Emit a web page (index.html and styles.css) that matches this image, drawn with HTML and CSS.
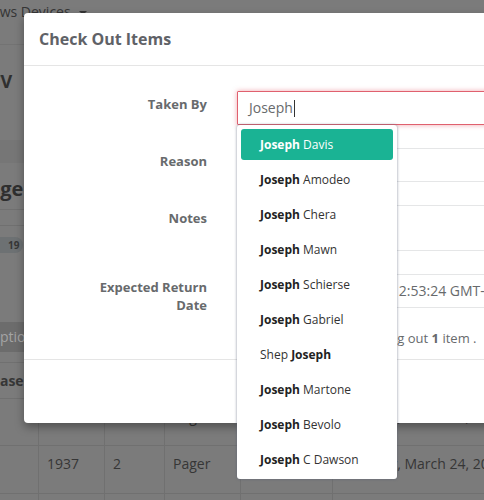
FILE: index.html
```html
<!DOCTYPE html>
<html>
<head>
<meta charset="utf-8">
<link rel="stylesheet" href="styles.css">
</head>
<body>
<div class="page">
  <div class="topbar"><span class="nav-link">Shows Devices</span><span class="nav-caret"></span></div>
  <div class="section-head"><h2 class="h-view">TV</h2></div>
  <div class="band"></div>
  <div class="section-title"><h2 class="h-manage">Manage Devices</h2></div>
  <div class="thin-row"></div>
  <div class="badge-row"><span class="badge">19</span></div>
  <div class="options-bar"><span class="options-text">Options</span></div>
  <div class="grid">
    <div class="cell head"><span class="cut">Case #</span></div>
    <div class="cell head">Item #</div>
    <div class="cell head">Qty</div>
    <div class="cell head">Type</div>
    <div class="cell head">Model</div>
    <div class="cell head">Date</div>

    <div class="cell r2"></div>
    <div class="cell r2">1936</div>
    <div class="cell r2">1</div>
    <div class="cell r2">Pager</div>
    <div class="cell r2"></div>
    <div class="cell r2 date-cell">Tuesday, March 24, 2015</div>

    <div class="cell r3"></div>
    <div class="cell r3">1937</div>
    <div class="cell r3">2</div>
    <div class="cell r3">Pager</div>
    <div class="cell r3"></div>
    <div class="cell r3 date-cell">Tuesday, March 24, 2015</div>

    <div class="cell r4"></div>
    <div class="cell r4"></div>
    <div class="cell r4"></div>
    <div class="cell r4"></div>
    <div class="cell r4"></div>
    <div class="cell r4"></div>
  </div>
</div>

<div class="modal">
  <div class="modal-header">
    <h4 class="modal-title">Check Out Items</h4>
  </div>
  <div class="modal-body">
    <div class="form-row">
      <div class="form-label">Taken By</div>
      <div class="field">
        <div class="input error">Joseph<span class="text-caret"></span></div>
        <ul class="menu">
          <li class="item active"><strong>Joseph</strong> Davis</li>
          <li class="item"><strong>Joseph</strong> Amodeo</li>
          <li class="item"><strong>Joseph</strong> Chera</li>
          <li class="item"><strong>Joseph</strong> Mawn</li>
          <li class="item"><strong>Joseph</strong> Schierse</li>
          <li class="item"><strong>Joseph</strong> Gabriel</li>
          <li class="item">Shep <strong>Joseph</strong></li>
          <li class="item"><strong>Joseph</strong> Martone</li>
          <li class="item"><strong>Joseph</strong> Bevolo</li>
          <li class="item"><strong>Joseph</strong> C Dawson</li>
        </ul>
      </div>
    </div>
    <div class="form-row">
      <div class="form-label">Reason</div>
      <div class="field"><div class="input"></div></div>
    </div>
    <div class="form-row">
      <div class="form-label">Notes</div>
      <div class="field"><div class="input textarea"></div></div>
    </div>
    <div class="form-row last">
      <div class="form-label">Expected Return Date</div>
      <div class="field"><div class="input date">Tue Mar 24 2015 12:53:24 GMT-0400 (EDT)</div></div>
    </div>
    <div class="form-row note-row">
      <div class="form-label"></div>
      <div class="field note">You are currently checking out <b>1</b> item .</div>
    </div>
  </div>
  <div class="modal-footer"></div>
</div>
</body>
</html>
```
FILE: styles.css
```css
html, body {
  margin: 0;
  padding: 0;
}
body {
  width: 484px;
  height: 500px;
  overflow: hidden;
  position: relative;
  background: #7b7b7b;
  font-family: "Open Sans", "Liberation Sans", sans-serif;
  color: #353535;
}
.page {
  width: 484px;
}
.topbar {
  box-sizing: border-box;
  height: 45px;
  padding-top: 2px;
  border-bottom: 1px solid #737373;
  display: flex;
  align-items: flex-start;
  font-size: 14px;
  line-height: 20px;
  white-space: nowrap;
}
.nav-link {
  margin-left: -25px;
}
.nav-caret {
  width: 0;
  height: 0;
  margin-left: 8px;
  margin-top: 9px;
  border-top: 4px solid #353535;
  border-left: 4px solid transparent;
  border-right: 4px solid transparent;
}
.section-head {
  box-sizing: border-box;
  height: 95px;
  padding-top: 24px;
}
h2 {
  margin: 0;
  font-weight: 700;
  color: #2f2f2f;
  white-space: nowrap;
}
.h-view {
  font-size: 18px;
  line-height: 24px;
  margin-left: -10px;
}
.band {
  height: 23px;
  background: #767676;
}
.section-title {
  box-sizing: border-box;
  height: 47px;
  padding-top: 13px;
  border-bottom: 1px solid #707070;
}
.h-manage {
  font-size: 20px;
  line-height: 26px;
  margin-left: -56px;
}
.thin-row {
  box-sizing: border-box;
  height: 16px;
  border-bottom: 1px solid #707070;
}
.badge-row {
  box-sizing: border-box;
  height: 96px;
  padding-top: 11px;
  display: flex;
  align-items: flex-start;
}
.badge {
  display: block;
  margin-left: -10px;
  padding: 0 4px 0 18px;
  height: 16px;
  line-height: 16px;
  border-radius: 8px;
  background: #6d7173;
  font-size: 10px;
  font-weight: 700;
  color: #363636;
}
.options-bar {
  height: 30px;
  margin-bottom: 10px;
  background: #6c6c6c;
  color: #a4a4a4;
  font-size: 14px;
  line-height: 30px;
  white-space: nowrap;
}
.options-text {
  margin-left: -11px;
}
.grid {
  display: grid;
  grid-template-columns: 39px 66px 60px 76px 92px 220px;
  grid-template-rows: 36px 47px 48px 40px;
  border-top: 1px solid #707070;
  font-size: 14px;
  line-height: 20px;
  color: #363636;
}
.cell {
  box-sizing: border-box;
  padding: 8px;
  border-right: 1px solid #707070;
  border-bottom: 1px solid #707070;
  white-space: nowrap;
  overflow: hidden;
}
.cell.head {
  font-weight: 700;
}
.cell.date-cell {
  padding-left: 10px;
}
.cut {
  display: inline-block;
  margin-left: -17px;
}

/* modal */
.modal {
  position: absolute;
  top: 13px;
  left: 24px;
  width: 640px;
  background: #fff;
  border-radius: 4px;
  box-shadow: 0 4px 10px rgba(0, 0, 0, 0.35);
  color: #676a6c;
}
.modal-header {
  padding: 15px;
  border-bottom: 1px solid #e5e5e5;
}
.modal-title {
  margin: 0;
  font-size: 16px;
  line-height: 22px;
  font-weight: 700;
  color: #5f6267;
}
.modal-body {
  padding: 25px 30px 12px 63px;
}
.form-row {
  display: flex;
  align-items: flex-start;
  gap: 30px;
  margin-bottom: 23px;
}
.form-row.last {
  margin-bottom: 21px;
}
.form-row.note-row {
  margin-bottom: 0;
}
.form-label {
  width: 120px;
  flex: none;
  box-sizing: border-box;
  padding-top: 4px;
  margin-bottom: -10px;
  text-align: right;
  font-size: 13px;
  line-height: 18px;
  font-weight: 700;
  color: #676a6c;
}
.note-row .form-label {
  margin-bottom: 0;
}
.field {
  flex: 1;
  min-width: 0;
  position: relative;
}
.input {
  box-sizing: border-box;
  height: 34px;
  padding: 6px 11px;
  border: 1px solid #e5e6e7;
  border-radius: 1px;
  font-size: 14px;
  line-height: 20px;
  color: #676a6c;
  white-space: nowrap;
  overflow: hidden;
}
.input.error {
  border-color: #e0606e;
  box-shadow: 0 0 5px rgba(229, 83, 98, 0.5);
}
.input.textarea {
  height: 46px;
}
.input.date {
  padding-left: 40px;
}
.text-caret {
  display: inline-block;
  width: 1px;
  height: 17px;
  margin-left: 1px;
  vertical-align: -4px;
  background: #333;
}
.note {
  padding-left: 7px;
  font-size: 13px;
  line-height: 18px;
  color: #676a6c;
  white-space: nowrap;
}
.modal-footer {
  height: 63px;
  border-top: 1px solid #e5e5e5;
}

/* typeahead menu */
.menu {
  position: absolute;
  top: 100%;
  left: 0;
  width: 160px;
  margin: 0;
  padding: 0;
  list-style: none;
  background: #fff;
  border-radius: 3px;
  box-shadow: 0 0 3px rgba(86, 96, 117, 0.7);
  font-size: 12px;
  z-index: 10;
}
.item {
  margin: 4px;
  padding: 3px 19px;
  line-height: 25px;
  border-radius: 3px;
  color: #333;
  white-space: nowrap;
}
.item strong {
  font-weight: 700;
  color: #222;
}
.item.active {
  background: #1ab394;
  color: #fff;
}
.item.active strong {
  color: #fff;
}
```
